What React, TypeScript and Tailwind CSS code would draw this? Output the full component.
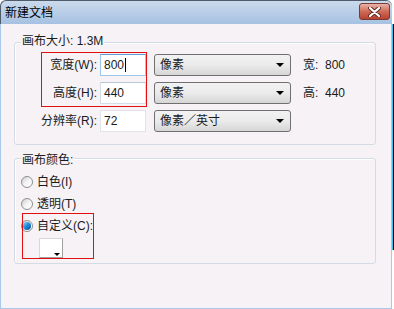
import React from "react";

const font = "font-['Liberation_Sans','Noto_Sans_CJK_SC',sans-serif]";

const Select: React.FC<{ label: string }> = ({ label }) => (
  <div className="ml-[8px] flex h-[22px] w-[137px] items-center justify-between rounded-[3px] border border-[#707070] bg-gradient-to-b from-[#f2f2f2] via-[#ebebeb] to-[#d6d6d6] pl-[5px] pr-[6px]">
    <span>{label}</span>
    <span className="h-0 w-0 border-x-[4px] border-t-[4px] border-x-transparent border-t-black" />
  </div>
);

const Field: React.FC<{ label: string; value: string; focus?: boolean; dim?: boolean }> = ({
  label,
  value,
  focus,
  dim,
}) => (
  <>
    <span className="w-[82px] text-right">{label}</span>
    <div
      className={`ml-[3px] flex h-[22px] w-[46px] items-center bg-white pl-[3px] border ${
        focus
          ? "border-[#9cc6ec] border-t-[#5c9bd6]"
          : dim
          ? "border-[#e2e3e6]"
          : "border-[#d5dde6] border-t-[#b9c6d4]"
      }`}
    >
      {value}
      {focus && <span className="ml-[1px] h-[14px] w-px bg-black" />}
    </div>
  </>
);

const Radio: React.FC<{ checked?: boolean }> = ({ checked }) => (
  <span className="flex h-[12px] w-[12px] items-center justify-center rounded-full border border-[#8e8f8f] bg-gradient-to-br from-[#d0d0d0] via-[#f4f4f4] to-white">
    {checked && (
      <span className="h-[8px] w-[8px] rounded-full bg-gradient-to-br from-[#7fd3ff] via-[#1b8ad4] to-[#0d4f8f]" />
    )}
  </span>
);

export default function App() {
  return (
    <div className={`flex h-[309px] w-[394px] overflow-hidden bg-white text-[12px] leading-[14px] text-[#1b1b1b] ${font}`}>
      <div className="flex w-[392px] flex-col">
        {/* Title bar */}
        <div className="flex h-[24px] shrink-0 items-center justify-between rounded-t-[6px] border-t border-l border-[#4e5b6a] bg-gradient-to-b from-[#cbdaec] to-[#a6c1e2] pl-[4px] pr-[2px]">
          <span className="text-[12px] text-black">新建文档</span>
          <div className="mt-[-2px] flex h-[17px] w-[31px] items-center justify-center rounded-[3px] border border-[#7a3b33] bg-gradient-to-b from-[#e8b3a8] via-[#cf6a57] to-[#b8412f]">
            <svg width="13" height="10" viewBox="0 0 13 10">
              <path d="M2 1 L11 9 M11 1 L2 9" stroke="#5a2a24" strokeWidth="4" strokeLinecap="round" />
              <path d="M2 1 L11 9 M11 1 L2 9" stroke="#ffffff" strokeWidth="2.2" strokeLinecap="round" />
            </svg>
          </div>
        </div>

        {/* Body */}
        <div className="flex flex-1 flex-col border-x border-b border-[#aac8ec] bg-[#f6f2f6] pl-[13px] pt-[18px]">
          {/* Canvas size group */}
          <div className="relative h-[103px] w-[362px] rounded-[3px] border border-[#d3dce5] shadow-[inset_1px_1px_0_#ffffff]">
            <span className="absolute left-[6px] top-[-9px] bg-[#f6f2f6] px-[1px]">画布大小: 1.3M</span>
            <div className="mt-[11px] flex flex-col gap-[6px]">
              <div className="flex h-[22px] items-center">
                <Field label="宽度(W):" value="800" focus />
                <Select label="像素" />
                <span className="ml-[12px] whitespace-pre">宽:  800</span>
              </div>
              <div className="flex h-[22px] items-center">
                <Field label="高度(H):" value="440" />
                <Select label="像素" />
                <span className="ml-[12px] whitespace-pre">高:  440</span>
              </div>
              <div className="flex h-[22px] items-center">
                <Field label="分辨率(R):" value="72" dim />
                <Select label="像素／英寸" />
              </div>
            </div>
            <div className="pointer-events-none absolute left-[26px] top-[9px] h-[55px] w-[106px] border border-[#e01010]" />
          </div>

          {/* Canvas colour group */}
          <div className="relative mt-[13px] h-[106px] w-[362px] rounded-[3px] border border-[#d3dce5] shadow-[inset_1px_1px_0_#ffffff]">
            <span className="absolute left-[6px] top-[-6px] bg-[#f6f2f6] px-[1px]">画布颜色:</span>
            <div className="ml-[6px] mt-[16px] flex flex-col gap-[8px]">
              <label className="flex h-[14px] items-center gap-[4px]">
                <Radio />
                白色(I)
              </label>
              <label className="flex h-[14px] items-center gap-[4px]">
                <Radio />
                透明(T)
              </label>
              <label className="flex h-[14px] items-center gap-[4px]">
                <Radio checked />
                自定义(C):
              </label>
              <div className="relative ml-[18px] mt-[-3px] h-[20px] w-[24px] border border-[#a0a0a0] border-l-[#d8d8d8] border-t-[#d8d8d8] bg-white">
                <span className="absolute bottom-[1px] right-[2px] h-0 w-0 border-x-[3px] border-t-[3px] border-x-transparent border-t-black" />
              </div>
            </div>
            <div className="pointer-events-none absolute left-[7px] top-[54px] h-[46px] w-[72px] border border-[#e01010]" />
          </div>
        </div>
      </div>
      <div className="mt-[24px] h-[226px] w-[2px] border-l border-[#3cc4ef] bg-black" />
    </div>
  );
}
